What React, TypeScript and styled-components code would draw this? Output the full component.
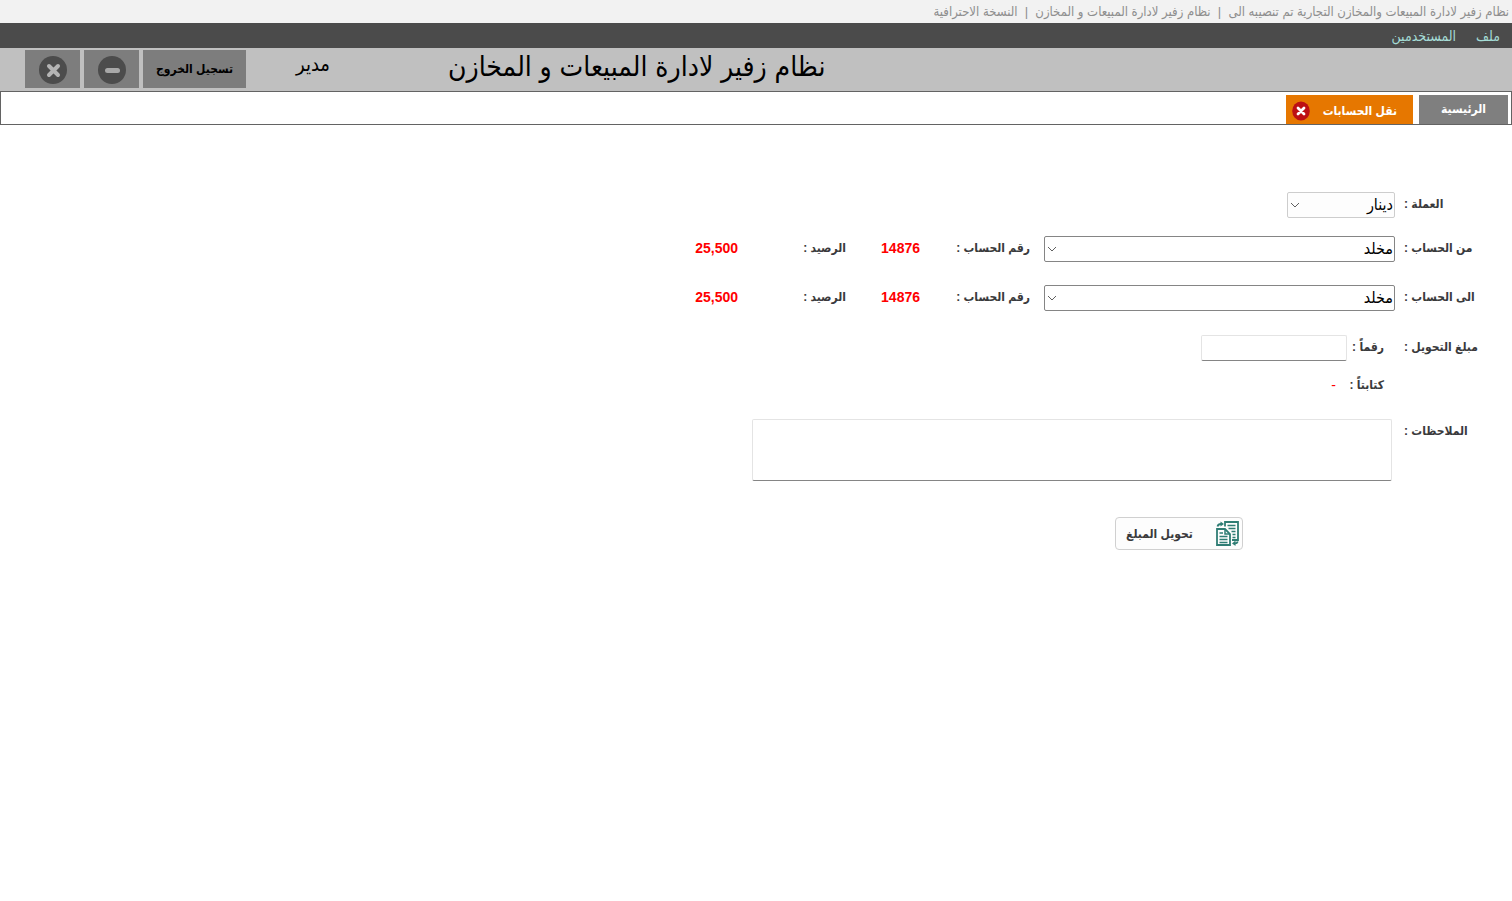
import React from "react";
import styled, { createGlobalStyle } from "styled-components";

const arabic = `"Liberation Sans", "DejaVu Sans Condensed", "DejaVu Sans", sans-serif`;

const GlobalStyle = createGlobalStyle`
  *, *::before, *::after { box-sizing: border-box; }
  body { margin: 0; background: #fff; color: #3a3a3c; font-family: ${arabic}; font-size: 12px; line-height: 20px; }
  button, input, select, textarea { font: inherit; color: inherit; margin: 0; }
`;

const Page = styled.div`
  min-height: 100vh;
  display: flex;
  flex-direction: column;
`;

const CaptionBar = styled.div`
  height: 23px;
  padding: 0 3px;
  background: #f2f2f2;
  color: #8e8e8e;
  font-size: 13px;
  line-height: 24px;
  white-space: pre;
  overflow: hidden;
`;

const MenuBar = styled.nav`
  height: 25px;
  padding: 0 12px;
  display: flex;
  align-items: center;
  gap: 20px;
  background: #4b4b4b;
`;

const MenuLink = styled.a`
  color: #a5dcd6;
  font-size: 14px;
  line-height: 24px;
  text-decoration: none;
`;

const Header = styled.header`
  height: 43px;
  padding: 2px 0 3px 25px;
  display: flex;
  justify-content: flex-end;
  align-items: stretch;
  background: #c0c0c0;
  color: #000;
`;

const AppTitle = styled.h1`
  margin: 0;
  font-size: 28px;
  font-weight: 400;
  line-height: 34px;
  white-space: nowrap;
`;

const UserName = styled.span`
  width: 84px;
  margin-right: 118px;
  font-size: 20px;
  line-height: 28px;
`;

const WindowButtons = styled.div`
  display: flex;
  gap: 4px;
`;

const HeaderButton = styled.button<{ $width: number }>`
  width: ${(p) => p.$width}px;
  padding: 0;
  display: flex;
  align-items: center;
  justify-content: center;
  border: 0;
  background: #7d7d7d;
  color: #000;
  font-weight: 700;

  svg { margin-top: 2px; }
`;

const TabStrip = styled.div`
  height: 34px;
  padding: 3px 3px 0;
  display: flex;
  gap: 6px;
  border: 1px solid #636363;
`;

const Tab = styled.div<{ $active?: boolean }>`
  width: ${(p) => (p.$active ? 127 : 89)}px;
  padding: ${(p) => (p.$active ? "2px 16px 0 5px" : "0 0 2px")};
  display: flex;
  align-items: center;
  justify-content: ${(p) => (p.$active ? "space-between" : "center")};
  background: ${(p) => (p.$active ? "#e67700" : "#7f7f7f")};
`;

const TabLabel = styled.button`
  padding: 0;
  border: 0;
  background: none;
  color: #fff;
  font-weight: 700;
  white-space: nowrap;
`;

const TabClose = styled.button`
  width: 20px;
  height: 20px;
  padding: 0;
  display: flex;
  border: 0;
  background: none;
`;

const Form = styled.form`
  padding-top: 67px;
`;

const Row = styled.div<{ $top?: number }>`
  min-height: 26px;
  margin-top: ${(p) => p.$top ?? 0}px;
  display: flex;
  align-items: flex-start;
`;

const Label = styled.label`
  flex: 0 0 108px;
  margin-left: 9px;
  padding-top: 2px;
  text-align: left;
  font-weight: 700;
  white-space: nowrap;
`;

const SubLabel = styled.label`
  flex: 0 0 48px;
  padding: 2px 11px 0 0;
  font-weight: 700;
  white-space: nowrap;
`;

const InfoLabel = styled.span<{ $width: number }>`
  flex: 0 0 ${(p) => p.$width}px;
  padding-top: 2px;
  font-weight: 700;
  white-space: nowrap;
`;

const InfoValue = styled.output<{ $width: number }>`
  flex: 0 0 ${(p) => p.$width}px;
  padding-top: 2px;
  color: #f00;
  font-size: 14px;
  font-weight: 700;
`;

const Words = styled.output`
  margin-right: 11px;
  padding-top: 2px;
  color: #f00;
  font-size: 14px;
`;

const SelectBox = styled.div<{ $width: number; $after?: number }>`
  position: relative;
  flex: 0 1 ${(p) => p.$width}px;
  height: 26px;
  margin-left: ${(p) => p.$after ?? 0}px;
`;

const Select = styled.select<{ $soft?: boolean }>`
  width: 100%;
  height: 100%;
  padding: 0 1px 0 20px;
  appearance: none;
  border: 1px solid ${(p) => (p.$soft ? "#cdcdcd" : "#858585")};
  border-radius: 2px;
  background: ${(p) => (p.$soft ? "#fdfdfd" : "#fff")};
  color: #000;
  font-size: 16px;
`;

const Chevron = styled.svg`
  position: absolute;
  left: 3px;
  top: 8px;
  pointer-events: none;
`;

const AmountInput = styled.input`
  width: 146px;
  height: 26px;
  padding: 2px 4px;
  border: 1px solid #e4e4e4;
  border-bottom-color: #858585;
  border-radius: 2px;
  background: #fff;
`;

const Notes = styled.textarea`
  flex: 0 1 640px;
  height: 62px;
  margin-right: 3px;
  padding: 4px;
  resize: none;
  border: 1px solid #e4e4e4;
  border-bottom-color: #858585;
  border-radius: 2px;
`;

const SubmitButton = styled.button`
  width: 128px;
  height: 33px;
  margin-right: 269px;
  padding: 0 3px 0 10px;
  display: flex;
  align-items: center;
  justify-content: space-between;
  border: 1px solid #d0d0d0;
  border-radius: 4px;
  background: #fdfdfd;
  font-weight: 700;
  white-space: nowrap;
`;

function DropDown(props: { id: string; width: number; after?: number; soft?: boolean; value: string }) {
  return (
    <SelectBox $width={props.width} $after={props.after}>
      <Select id={props.id} $soft={props.soft} defaultValue={props.value}>
        <option>{props.value}</option>
      </Select>
      <Chevron width="10" height="10" viewBox="0 0 10 10" fill="none" stroke="#606060">
        <path d="M1 3l4 4 4-4" />
      </Chevron>
    </SelectBox>
  );
}

function AccountRow(props: { id: string; label: string; top: number; account: string; number: string; balance: string }) {
  return (
    <Row $top={props.top}>
      <Label htmlFor={props.id}>{props.label} :</Label>
      <DropDown id={props.id} width={351} after={14} value={props.account} />
      <InfoLabel $width={110}>رقم الحساب :</InfoLabel>
      <InfoValue $width={74}>{props.number}</InfoValue>
      <InfoLabel $width={108}>الرصيد :</InfoLabel>
      <InfoValue $width={44}>{props.balance}</InfoValue>
    </Row>
  );
}

function CircleIcon({ kind }: { kind: "minus" | "close" }) {
  return (
    <svg width="28" height="28" viewBox="0 0 28 28">
      <circle cx="14" cy="14" r="14" fill="#4c4c4c" />
      <path
        d={kind === "minus" ? "M9.5 14.5h10" : "M10 10l9 9M19 10l-9 9"}
        stroke={kind === "minus" ? "#a8a8a8" : "#b4b4b4"}
        strokeWidth={kind === "minus" ? 5 : 4}
        strokeLinecap="round"
      />
    </svg>
  );
}

function TransferIcon() {
  return (
    <svg width="23" height="25" viewBox="0 0 23 25" fill="none" stroke="#2f7d74" strokeWidth="1.8">
      <path d="M9 5.500V1h13v18h-6" />
      <path d="M11.500 4.500h8M12.500 7.500h7M15.500 10.500h4M16.500 13.500h3M16.500 16.500h3" strokeWidth="1.400" />
      <path d="M1 8h8l5 5v11H1z" fill="#fdfdfd" />
      <path d="M9 8v5h5" strokeWidth="1.500" />
      <path d="M3.500 12h3.500M3.500 15.500h8M3.500 18.500h8M3.500 21.500h8" strokeWidth="1.400" />
      <path d="M1.500 5.500C2 3.500 3 3 5 3" />
      <path d="M4.500 0.500L8 3 4.500 5.500z" fill="#2f7d74" stroke="none" />
      <path d="M21.800 20.500c-.5 1.600-1.300 2-3 2" />
      <path d="M19.500 19.500L16 22.500l3.500 2.500z" fill="#2f7d74" stroke="none" />
    </svg>
  );
}

export default function App() {
  return (
    <Page dir="rtl" lang="ar">
      <GlobalStyle />
      <CaptionBar>
        {"نظام زفير لادارة المبيعات والمخازن التجارية تم تنصيبه الى  |  نظام زفير لادارة المبيعات و المخازن  |  النسخة الاحترافية"}
      </CaptionBar>
      <MenuBar>
        <MenuLink href="#file">ملف</MenuLink>
        <MenuLink href="#users">المستخدمين</MenuLink>
      </MenuBar>
      <Header>
        <AppTitle>نظام زفير لادارة المبيعات و المخازن</AppTitle>
        <UserName>مدير</UserName>
        <WindowButtons>
          <HeaderButton $width={103}>تسجيل الخروج</HeaderButton>
          <HeaderButton $width={55} aria-label="تصغير">
            <CircleIcon kind="minus" />
          </HeaderButton>
          <HeaderButton $width={55} aria-label="اغلاق">
            <CircleIcon kind="close" />
          </HeaderButton>
        </WindowButtons>
      </Header>
      <TabStrip>
        <Tab>
          <TabLabel>الرئيسية</TabLabel>
        </Tab>
        <Tab $active>
          <TabLabel>نقل الحسابات</TabLabel>
          <TabClose aria-label="اغلاق">
            <svg width="20" height="20" viewBox="0 0 20 20">
              <ellipse cx="10" cy="10" rx="8.800" ry="9.500" fill="#bd1013" />
              <path d="M7 7l6 6M13 7l-6 6" stroke="#fff" strokeWidth="2.800" strokeLinecap="round" />
            </svg>
          </TabClose>
        </Tab>
      </TabStrip>
      <Form onSubmit={(e) => e.preventDefault()}>
        <Row>
          <Label htmlFor="currency">العملة :</Label>
          <DropDown id="currency" width={108} soft value="دينار" />
        </Row>
        <AccountRow id="from" label="من الحساب" top={18} account="مخلد" number="14876" balance="25,500" />
        <AccountRow id="to" label="الى الحساب" top={23} account="مخلد" number="14876" balance="25,500" />
        <Row $top={24}>
          <Label as="span">مبلغ التحويل :</Label>
          <SubLabel htmlFor="amount">رقماً :</SubLabel>
          <AmountInput id="amount" type="text" />
        </Row>
        <Row $top={12}>
          <Label as="span" />
          <SubLabel htmlFor="words">كتابتاً :</SubLabel>
          <Words id="words">-</Words>
        </Row>
        <Row $top={20}>
          <Label htmlFor="notes">الملاحظات :</Label>
          <Notes id="notes" />
        </Row>
        <Row $top={36}>
          <SubmitButton type="submit">
            <TransferIcon />
            تحويل المبلغ
          </SubmitButton>
        </Row>
      </Form>
    </Page>
  );
}
